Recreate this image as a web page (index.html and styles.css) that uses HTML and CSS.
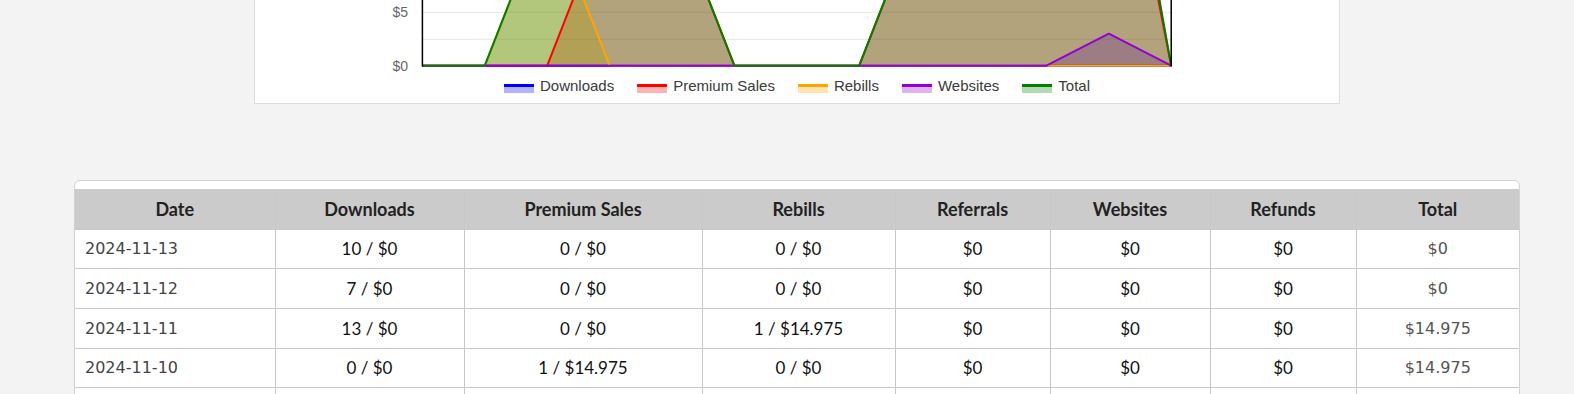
FILE: index.html
```html
<!DOCTYPE html>
<html lang="en">
<head>
<meta charset="utf-8">
<title>Stats</title>
<link rel="stylesheet" href="styles.css">
</head>
<body>
<div class="page">
  <section class="chart-card">
    <svg class="chart" width="1084" height="77" viewBox="0 0 1084 77">
      <g class="grid">
        <line x1="167.4" y1="12.3" x2="916.2" y2="12.3"/>
        <line x1="167.4" y1="39.3" x2="916.2" y2="39.3"/>
      </g>
      <text class="ylabel" x="153" y="12.3">$5</text>
      <text class="ylabel" x="153" y="65.7">$0</text>
      <line class="axis" x1="167.4" y1="65.7" x2="916.2" y2="65.7"/>
      <g class="fills">
        <polygon fill="rgba(255,0,0,0.3)" points="167.4,65.7 229.8,65.7 292.2,65.7 354.6,-94.1 417,-94.1 479.4,65.7 541.8,65.7 604.2,65.7 666.6,-94.1 729,-94.1 791.4,-94.1 853.8,-253.9 916.2,65.7"/>
        <polygon fill="rgba(255,165,0,0.3)" points="167.4,65.7 229.8,65.7 292.2,-94.1 354.6,65.7 916.2,65.7"/>
        <polygon fill="rgba(148,0,211,0.3)" points="167.4,65.7 791.4,65.7 853.8,33.7 916.2,65.7"/>
        <polygon fill="rgba(0,128,0,0.3)" points="167.4,65.7 229.8,65.7 292.2,-94.1 354.6,-94.1 417,-94.1 479.4,65.7 541.8,65.7 604.2,65.7 666.6,-94.1 729,-94.1 791.4,-94.1 853.8,-285.9 916.2,65.7"/>
      </g>
      <g class="lines">
        <polyline stroke="#0000ff" points="167.4,65.7 916.2,65.7"/>
        <polyline stroke="#ff0000" points="167.4,65.7 229.8,65.7 292.2,65.7 354.6,-94.1 417,-94.1 479.4,65.7 541.8,65.7 604.2,65.7 666.6,-94.1 729,-94.1 791.4,-94.1 853.8,-253.9 916.2,65.7"/>
        <polyline stroke="#ffa500" points="167.4,65.7 229.8,65.7 292.2,-94.1 354.6,65.7 916.2,65.7"/>
        <polyline stroke="#9400d3" points="167.4,65.7 791.4,65.7 853.8,33.7 916.2,65.7"/>
        <polyline stroke="#008000" points="167.4,65.7 229.8,65.7 292.2,-94.1 354.6,-94.1 417,-94.1 479.4,65.7 541.8,65.7 604.2,65.7 666.6,-94.1 729,-94.1 791.4,-94.1 853.8,-285.9 916.2,65.7"/>
      </g>
      <line class="frame" x1="167.4" y1="-200" x2="167.4" y2="66.5"/>
      <line class="frame" x1="916.2" y1="-200" x2="916.2" y2="66.5"/>
    </svg>
    <ul class="legend">
      <li class="legend-item"><span class="swatch swatch-blue"></span><span class="legend-label">Downloads</span></li>
      <li class="legend-item"><span class="swatch swatch-red"></span><span class="legend-label">Premium Sales</span></li>
      <li class="legend-item"><span class="swatch swatch-orange"></span><span class="legend-label">Rebills</span></li>
      <li class="legend-item"><span class="swatch swatch-purple"></span><span class="legend-label">Websites</span></li>
      <li class="legend-item"><span class="swatch swatch-green"></span><span class="legend-label">Total</span></li>
    </ul>
  </section>

  <section class="table-card">
    <table class="stats">
      <colgroup>
        <col class="c-date"><col class="c-dl"><col class="c-prem"><col class="c-reb">
        <col class="c-ref"><col class="c-web"><col class="c-refund"><col class="c-total">
      </colgroup>
      <thead>
        <tr>
          <th>Date</th><th>Downloads</th><th>Premium Sales</th><th>Rebills</th>
          <th>Referrals</th><th>Websites</th><th>Refunds</th><th>Total</th>
        </tr>
      </thead>
      <tbody>
        <tr>
          <td class="date">2024-11-13</td><td>10 / $0</td><td>0 / $0</td><td>0 / $0</td>
          <td>$0</td><td>$0</td><td>$0</td><td class="total">$0</td>
        </tr>
        <tr>
          <td class="date">2024-11-12</td><td>7 / $0</td><td>0 / $0</td><td>0 / $0</td>
          <td>$0</td><td>$0</td><td>$0</td><td class="total">$0</td>
        </tr>
        <tr>
          <td class="date">2024-11-11</td><td>13 / $0</td><td>0 / $0</td><td>1 / $14.975</td>
          <td>$0</td><td>$0</td><td>$0</td><td class="total">$14.975</td>
        </tr>
        <tr>
          <td class="date">2024-11-10</td><td>0 / $0</td><td>1 / $14.975</td><td>0 / $0</td>
          <td>$0</td><td>$0</td><td>$0</td><td class="total">$14.975</td>
        </tr>
        <tr>
          <td class="date">2024-11-09</td><td>9 / $0</td><td>0 / $0</td><td>0 / $0</td>
          <td>$0</td><td>$0</td><td>$0</td><td class="total">$0</td>
        </tr>
      </tbody>
    </table>
  </section>
</div>
</body>
</html>
```

FILE: styles.css
```css
* { box-sizing: border-box; }

html, body {
  margin: 0;
  padding: 0;
  background: #f3f3f3;
  font-family: "Liberation Sans", Arial, sans-serif;
  overflow: hidden;
}

.page {
  margin-left: 74px;
  width: 1446px;
  display: flex;
  flex-direction: column;
  align-items: center;
}

/* ---------- chart card ---------- */
.chart-card {
  width: 1086px;
  height: 104px;
  background: #fff;
  border: 1px solid #dedede;
  border-top: none;
  display: flex;
  flex-direction: column;
}

.chart {
  display: block;
  flex: none;
}

.grid line {
  stroke: rgba(0, 0, 0, 0.1);
  stroke-width: 1;
}

.ylabel {
  font-family: "Liberation Sans", Arial, sans-serif;
  font-size: 14px;
  fill: #666;
  text-anchor: end;
  dominant-baseline: central;
}

.axis {
  stroke: #000;
  stroke-width: 1;
}

.lines polyline {
  fill: none;
  stroke-width: 2;
  stroke-linejoin: round;
}

.frame {
  stroke: #000;
  stroke-width: 1.5;
}

.legend {
  list-style: none;
  margin: 0;
  padding: 0;
  display: flex;
  justify-content: center;
  gap: 23px;
  height: 17px;
}

.legend-item {
  display: flex;
  align-items: flex-start;
  gap: 6px;
  font-size: 15px;
  line-height: 17px;
  color: #3a3a3a;
}

.swatch {
  display: block;
  width: 30px;
  height: 9px;
  margin-top: 7px;
  border-top: 3px solid;
}
.swatch-blue   { border-color: #0000ff; background: rgba(0, 0, 255, 0.3); }
.swatch-red    { border-color: #ff0000; background: rgba(255, 0, 0, 0.3); }
.swatch-orange { border-color: #ffa500; background: rgba(255, 165, 0, 0.3); }
.swatch-purple { border-color: #9400d3; background: rgba(148, 0, 211, 0.3); }
.swatch-green  { border-color: #008000; background: rgba(0, 128, 0, 0.3); }

/* ---------- table card ---------- */
.table-card {
  margin-top: 76px;
  width: 1446px;
  background: #fff;
  border: 1px solid #d2d2d2;
  border-radius: 6px;
  padding-top: 8px;
  overflow: hidden;
}

.stats {
  width: 1444px;
  table-layout: fixed;
  border-collapse: collapse;
}

.c-date   { width: 200px; }
.c-dl     { width: 189px; }
.c-prem   { width: 238px; }
.c-reb    { width: 193px; }
.c-ref    { width: 155px; }
.c-web    { width: 160px; }
.c-refund { width: 146px; }
.c-total  { width: 163px; }

.stats th,
.stats td {
  border: 1px solid #c8c8c8;
  padding: 0;
  text-align: center;
  vertical-align: middle;
}

.stats tr > :first-child { border-left: none; }
.stats tr > :last-child { border-right: none; }
.stats thead th { border-top: none; }

.stats th {
  background: #cbcbcb;
  height: 40px;
  font-family: Lato, "Open Sans", sans-serif;
  font-weight: 700;
  font-size: 18px;
  color: #222;
}

.stats tbody tr { height: 40px; }
.stats tbody tr:nth-child(3n+1) { height: 39px; }

.stats td {
  font-family: Lato, "Open Sans", sans-serif;
  font-size: 17px;
  color: #111;
}

.stats td.date {
  text-align: left;
  padding-left: 10px;
  font-family: "DejaVu Sans", Verdana, sans-serif;
  font-size: 16px;
  color: #444;
}

.stats td.total {
  font-family: "DejaVu Sans", Verdana, sans-serif;
  font-size: 16px;
  color: #555;
}
```
